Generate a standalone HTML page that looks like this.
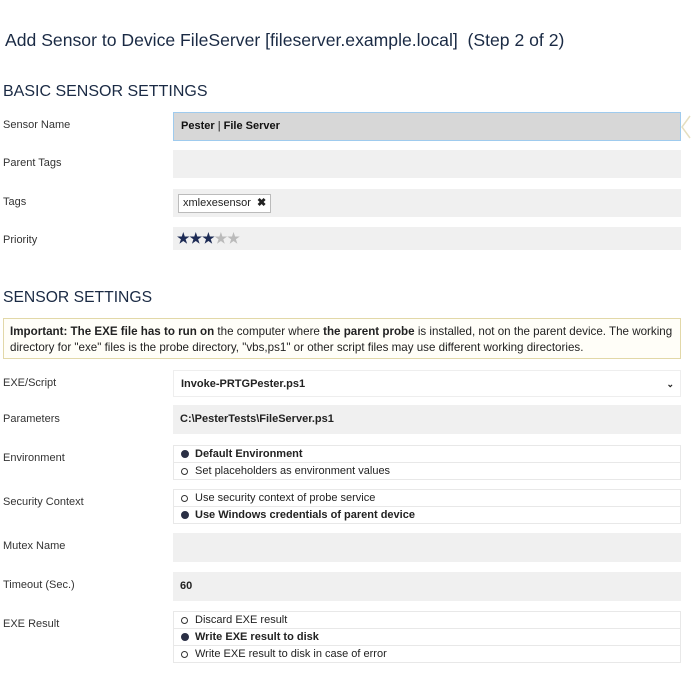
<!DOCTYPE html><html><head><style>
body{margin:0;width:691px;height:691px;background:#fff;font-family:"Liberation Sans",sans-serif;color:#222;position:relative;overflow:hidden}
.a{position:absolute}
.lbl{position:absolute;left:3px;font-size:11px;color:#333}
.box{position:absolute;left:173px;width:508px;background:#f0f0f0;font-size:11px;font-weight:bold;box-sizing:border-box;padding-left:7px}
.rg{position:absolute;left:173px;width:508px;border:1px solid #e8e8e8;box-sizing:border-box;font-size:11px}
.rg div{height:16px;line-height:16px;border-bottom:1px solid #e8e8e8;padding-left:21px;position:relative}
.rg div:last-child{border-bottom:none}
.rg div:before{content:"";position:absolute;left:7px;top:5px;width:5px;height:5px;border:1px solid #333;border-radius:50%}
.rg div.on{font-weight:bold}
.rg div.on:before{background:#2a2f45;border-color:#2a2f45;width:6px;height:6px;top:4px}
</style></head><body>
<div class="a" style="left:5px;top:30px;font-size:17.6px;color:#1a2a44">Add Sensor to Device FileServer [fileserver.example.local]&nbsp; (Step 2 of 2)</div>
<div class="a" style="left:3px;top:83px;font-size:16px;color:#1a2a44">BASIC SENSOR SETTINGS</div>
<div class="lbl" style="top:119px">Sensor Name</div>
<div class="box" style="top:112px;height:29px;line-height:27px;background:#d7d7d7;border:1px solid #9fcbee;color:#111">Pester <span style="font-weight:normal">|</span> File Server</div>
<svg class="a" style="left:680px;top:113px" width="11" height="28"><path d="M10 3 L2 14 L10 25" fill="none" stroke="#e6dfc0" stroke-width="1.5"/></svg>
<div class="lbl" style="top:157px">Parent Tags</div>
<div class="box" style="top:150px;height:28px"></div>
<div class="lbl" style="top:196px">Tags</div>
<div class="box" style="top:189px;height:28px"><span style="display:inline-block;margin-top:5px;margin-left:-2px;background:#fff;border:1px solid #bbb;padding:1px 4px;font-weight:normal;line-height:15px">xmlexesensor &nbsp;<b>✖</b></span></div>
<div class="lbl" style="top:234px">Priority</div>
<div class="box" style="top:227px;height:23px;line-height:22px;font-size:14px;padding-left:4px"><span style="color:#1d2b55">★★★</span><span style="color:#bbb">★★</span></div>
<div class="a" style="left:3px;top:289px;font-size:15.7px;color:#1a2a44">SENSOR SETTINGS</div>
<div class="a" style="left:3px;top:318px;width:678px;height:41px;box-sizing:border-box;border:1px solid #e2d8a8;background:#fffef8;font-size:11.6px;padding:5px 6px;line-height:16px;color:#222;white-space:nowrap;letter-spacing:0;overflow:hidden"><b>Important: The EXE file has to run on</b> the computer where <b>the parent probe</b> is installed, not on the parent device. The working<br>directory for "exe" files is the probe directory, "vbs,ps1" or other script files may use different working directories.</div>
<div class="lbl" style="top:377px">EXE/Script</div>
<div class="box" style="top:370px;height:27px;line-height:26px;background:#fff;border:1px solid #eee">Invoke-PRTGPester.ps1<span style="position:absolute;right:6px;font-size:9px">⌄</span></div>
<div class="lbl" style="top:413px">Parameters</div>
<div class="box" style="top:405px;height:29px;line-height:29px">C:\PesterTests\FileServer.ps1</div>
<div class="lbl" style="top:452px">Environment</div>
<div class="rg" style="top:445px"><div class="on">Default Environment</div><div>Set placeholders as environment values</div></div>
<div class="lbl" style="top:496px">Security Context</div>
<div class="rg" style="top:489px"><div>Use security context of probe service</div><div class="on">Use Windows credentials of parent device</div></div>
<div class="lbl" style="top:540px">Mutex Name</div>
<div class="box" style="top:533px;height:29px"></div>
<div class="lbl" style="top:579px">Timeout (Sec.)</div>
<div class="box" style="top:572px;height:29px;line-height:29px">60</div>
<div class="lbl" style="top:618px">EXE Result</div>
<div class="rg" style="top:611px"><div>Discard EXE result</div><div class="on">Write EXE result to disk</div><div>Write EXE result to disk in case of error</div></div>
</body></html>
